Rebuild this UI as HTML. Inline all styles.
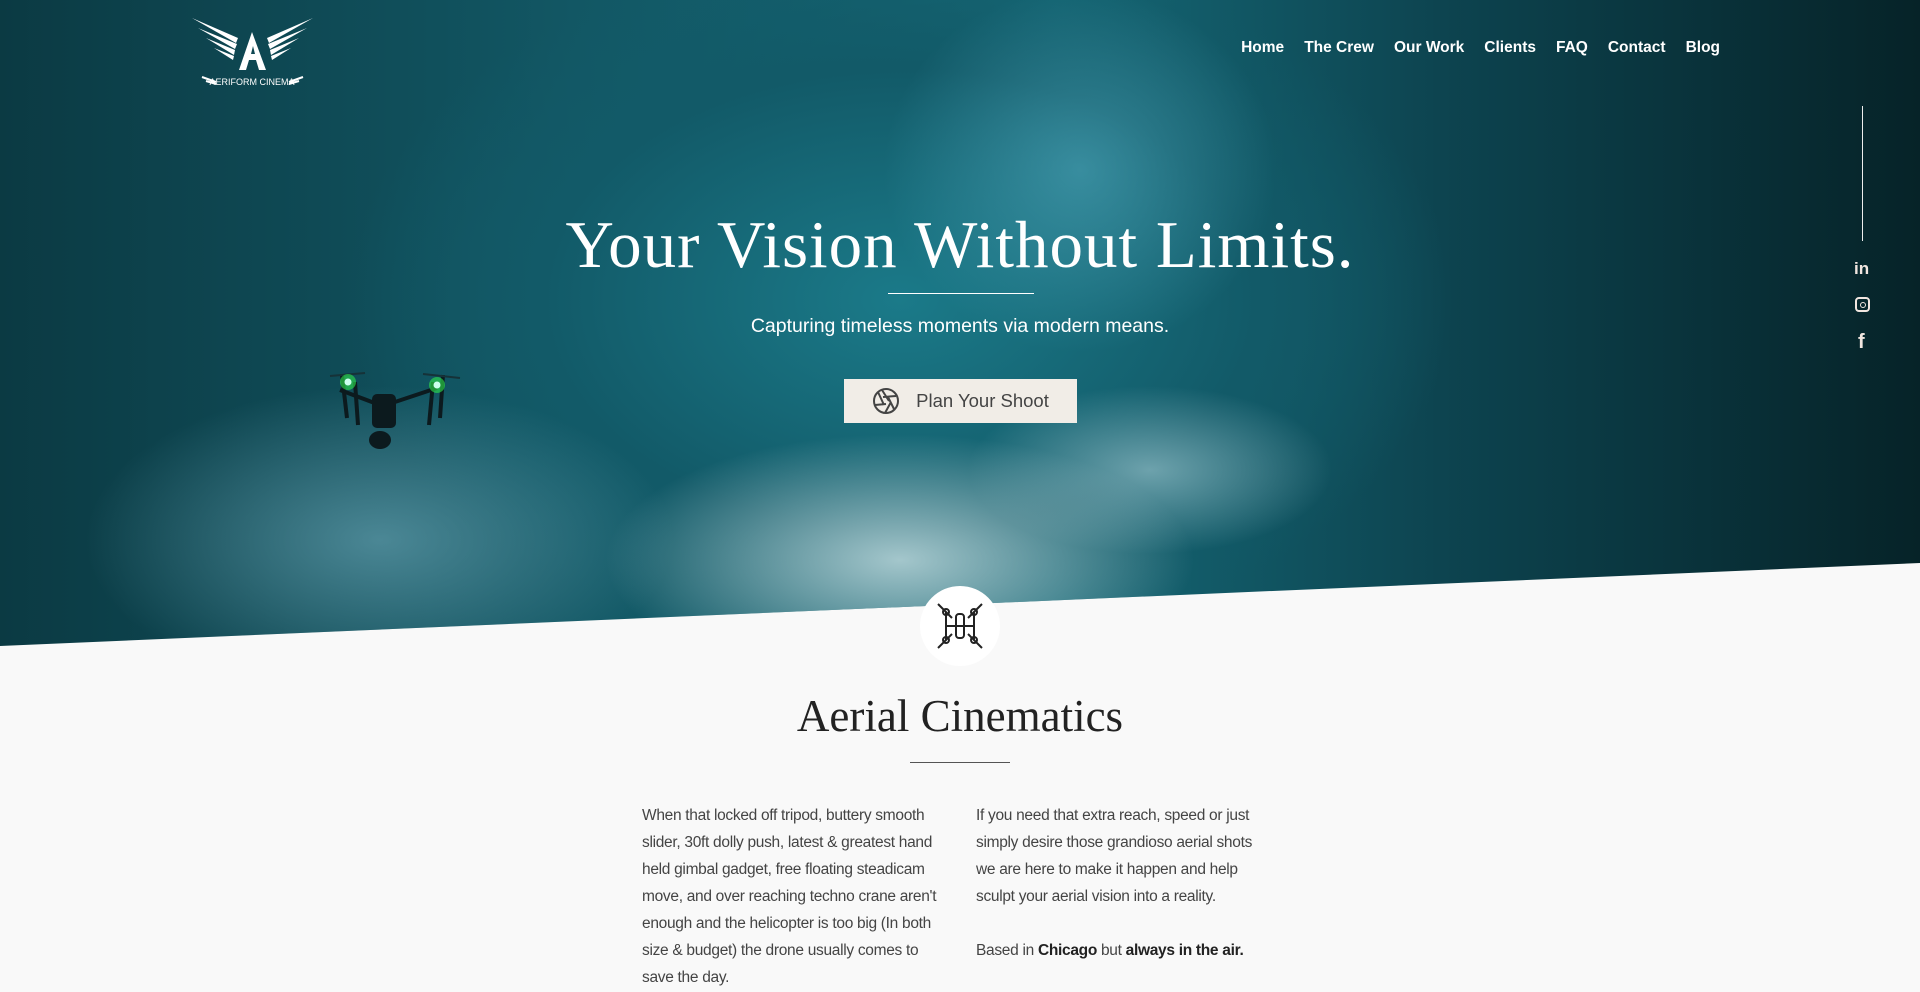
<!DOCTYPE html>
<html><head><meta charset="utf-8"><style>
*{margin:0;padding:0;box-sizing:border-box}
body{width:1920px;height:992px;overflow:hidden;background:#f9f9f9;font-family:"Liberation Sans",sans-serif;position:relative}
.hero{position:absolute;left:0;top:0;width:1920px;height:650px;clip-path:polygon(0 0,1920px 0,1920px 563px,0 646px);
background:
radial-gradient(ellipse 420px 180px at 900px 560px,rgba(200,225,228,.8),rgba(160,200,210,0) 70%),
radial-gradient(ellipse 260px 120px at 1150px 470px,rgba(170,210,218,.6),rgba(160,200,210,0) 70%),
radial-gradient(ellipse 420px 220px at 380px 540px,rgba(100,160,175,.7),rgba(90,150,165,0) 70%),
radial-gradient(ellipse 280px 260px at 1080px 170px,rgba(80,170,190,.6),rgba(60,150,170,0) 70%),
radial-gradient(ellipse 650px 420px at 900px 300px,#1b7a89,#125a68 55%,rgba(10,60,70,0) 85%),
linear-gradient(90deg,#0b3a43 0%,#125764 30%,#156876 55%,#0d4450 75%,#062328 100%);}
.nav{position:absolute;top:39px;right:200px;display:flex;gap:20px;color:#fff;font-weight:bold;font-size:15.5px}
.h1{position:absolute;top:207px;left:0;width:1920px;text-align:center;color:#fff;font-family:"Liberation Serif",serif;font-size:67px;letter-spacing:1px}
.ul{position:absolute;left:888px;top:293px;width:146px;height:1px;background:#fff}
.sub{position:absolute;top:315px;left:0;width:1920px;text-align:center;color:#fff;font-size:19.5px}
.btn{position:absolute;left:844px;top:379px;width:233px;height:44px;background:#f1ede7;color:#444;font-size:18.5px;display:flex;align-items:center;justify-content:center;gap:16px}
.circ{position:absolute;left:920px;top:586px;width:80px;height:80px;border-radius:50%;background:#fff}
.h2{position:absolute;top:690px;left:0;width:1920px;text-align:center;color:#222;font-family:"Liberation Serif",serif;font-size:45px}
.ul2{position:absolute;left:910px;top:762px;width:100px;height:1px;background:#555}
.col{position:absolute;top:802px;font-size:15.5px;line-height:27px;color:#444;letter-spacing:-.3px}
.side{position:absolute;left:1862px;top:106px;width:1px;height:135px;background:#eee}
</style></head><body>
<div class="hero"></div>
<svg style="position:absolute;left:180px;top:10px" width="145" height="85" viewBox="0 0 145 85">
<g fill="#fff">
<path d="M12 8 L58 28 L56 33 Z"/><path d="M18 18 L57 34 L55 39 Z"/><path d="M26 28 L55 40 L54 45 Z"/><path d="M34 38 L54 46 L53 50 Z"/>
<path d="M133 8 L87 28 L89 33 Z"/><path d="M127 18 L88 34 L90 39 Z"/><path d="M119 28 L90 40 L91 45 Z"/><path d="M111 38 L91 46 L92 50 Z"/>
<path d="M72 22 L59 60 L66 60 L69 50 L76 50 L79 60 L86 60 Z M71 44 L73 36 L75 44 Z"/>
</g>
<text x="72" y="75" fill="#fff" font-size="9" text-anchor="middle" font-family="Liberation Sans">AERIFORM CINEMA</text>
<path d="M22 67 L36 72 M26 71 L36 74 M123 67 L109 72 M119 71 L109 74" stroke="#fff" stroke-width="2"/>
</svg>
<div class="nav"><span>Home</span><span>The Crew</span><span>Our Work</span><span>Clients</span><span>FAQ</span><span>Contact</span><span>Blog</span></div>
<div class="side"></div>
<div style="position:absolute;left:1854px;top:259px;color:#f1e6e0;font-weight:bold;font-size:17px">in</div>
<div style="position:absolute;left:1855px;top:297px;width:15px;height:15px;border:2px solid #f1e6e0;border-radius:4px"><div style="margin:2.5px;width:6px;height:6px;border:1.5px solid #f1e6e0;border-radius:50%"></div></div>
<div style="position:absolute;left:1858px;top:331px;color:#f1e6e0;font-weight:bold;font-size:20px">f</div>
<svg style="position:absolute;left:315px;top:350px" width="150" height="110">
<g stroke="#0c1a1e" stroke-width="4" fill="none"><path d="M25 40 L65 55 L80 52 L122 38"/><path d="M27 25 L32 68 M40 32 L43 75 M128 25 L125 68 M118 32 L114 75"/></g>
<path d="M15 26 L50 23 M108 24 L145 28" stroke="#163238" stroke-width="2"/>
<rect x="57" y="44" width="24" height="34" rx="5" fill="#0c1a1e"/><ellipse cx="65" cy="90" rx="11" ry="9" fill="#0c1a1e"/>
<circle cx="33" cy="32" r="8" fill="#2ee64b" opacity=".6"/><circle cx="33" cy="32" r="3.5" fill="#cfe"/>
<circle cx="122" cy="35" r="8" fill="#2ee64b" opacity=".6"/><circle cx="122" cy="35" r="3.5" fill="#cfe"/>
</svg>
<div class="h1">Your Vision Without Limits.</div>
<div class="ul"></div>
<div class="sub">Capturing timeless moments via modern means.</div>
<div class="btn"><svg width="28" height="28" viewBox="0 0 28 28" fill="none" stroke="#444" stroke-width="2"><circle cx="14" cy="14" r="12"/><path d="M10 3 L17 14 M24 9 L11 10 M22 22 L16 10 M13 26 L19 15 M3 18 L14 17 M6 5 L12 18"/></svg>Plan Your Shoot</div>
<div class="circ"><svg width="80" height="80" viewBox="0 0 80 80" fill="none" stroke="#222" stroke-width="2"><path d="M26 26 L26 54 M54 26 L54 54 M26 40 L54 40 M18 18 L32 32 M62 18 L48 32 M18 62 L32 48 M62 62 L48 48"/><rect x="36" y="28" width="8" height="24" rx="3"/><circle cx="26" cy="26" r="3"/><circle cx="54" cy="26" r="3"/><circle cx="26" cy="54" r="3"/><circle cx="54" cy="54" r="3"/></svg></div>
<div class="h2">Aerial Cinematics</div>
<div class="ul2"></div>
<div class="col" style="left:642px;width:305px">When that locked off tripod, buttery smooth slider, 30ft dolly push, latest &amp; greatest hand held gimbal gadget, free floating steadicam move, and over reaching techno crane aren't enough and the helicopter is too big (In both size &amp; budget) the drone usually comes to save the day.</div>
<div class="col" style="left:976px;width:292px">If you need that extra reach, speed or just simply desire those grandioso aerial shots we are here to make it happen and help sculpt your aerial vision into a reality.<br><br>Based in <b style="color:#222">Chicago</b> but <b style="color:#222">always in the air.</b></div>
</body></html>
